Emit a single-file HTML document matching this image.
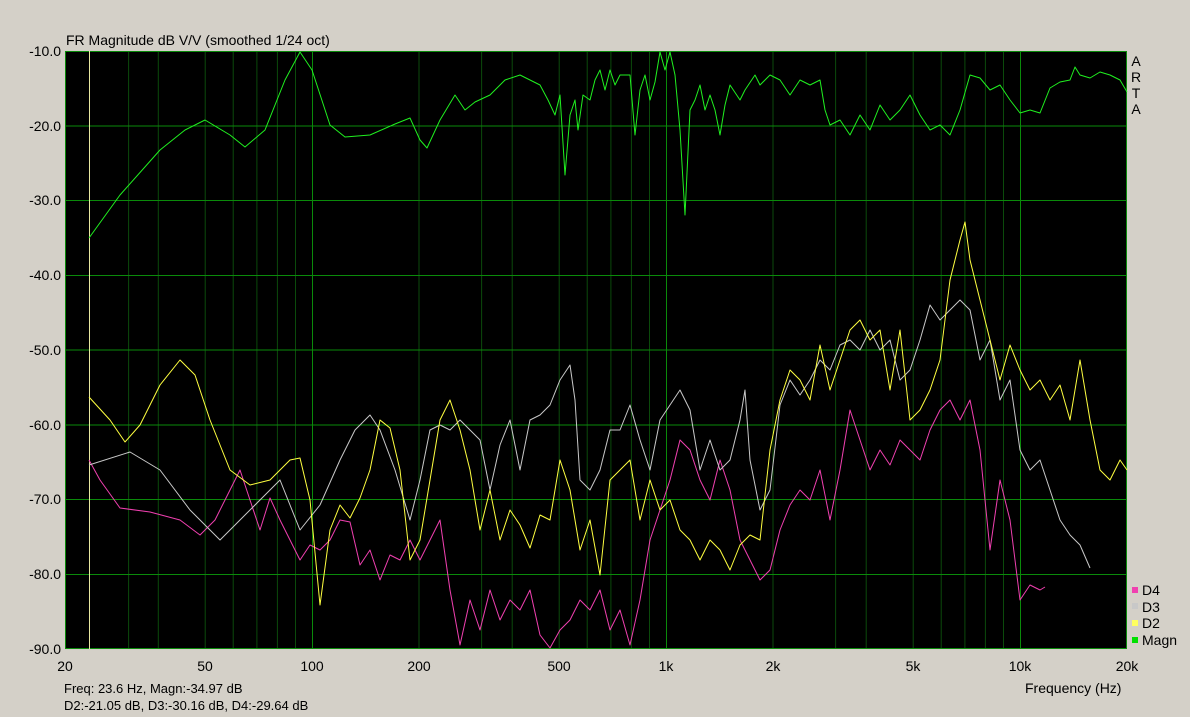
<!DOCTYPE html>
<html><head><meta charset="utf-8"><style>
html,body{margin:0;padding:0;background:#d4d0c8;}
svg{display:block;font-family:"Liberation Sans",sans-serif;font-size:13px;}
</style></head><body>
<svg width="1190" height="717" viewBox="0 0 1190 717">
<rect width="1190" height="717" fill="#d4d0c8"/>
<text x="66" y="45" font-size="14" fill="#000">FR Magnitude dB V/V (smoothed 1/24 oct)</text>
<rect x="65" y="51" width="1062" height="598" fill="#000"/>
<g stroke="#0b4a0b" stroke-width="1">
<line x1="128.6" y1="51" x2="128.6" y2="649"/><line x1="158.3" y1="51" x2="158.3" y2="649"/>
<line x1="205.2" y1="51" x2="205.2" y2="649"/><line x1="233.2" y1="51" x2="233.2" y2="649"/>
<line x1="256.9" y1="51" x2="256.9" y2="649"/><line x1="277.4" y1="51" x2="277.4" y2="649"/>
<line x1="295.5" y1="51" x2="295.5" y2="649"/>
<line x1="419" y1="51" x2="419" y2="649"/><line x1="481.6" y1="51" x2="481.6" y2="649"/>
<line x1="512.2" y1="51" x2="512.2" y2="649"/><line x1="559.2" y1="51" x2="559.2" y2="649"/>
<line x1="587.2" y1="51" x2="587.2" y2="649"/><line x1="610.9" y1="51" x2="610.9" y2="649"/>
<line x1="631.4" y1="51" x2="631.4" y2="649"/><line x1="649.5" y1="51" x2="649.5" y2="649"/>
<line x1="773" y1="51" x2="773" y2="649"/><line x1="835.6" y1="51" x2="835.6" y2="649"/>
<line x1="866.2" y1="51" x2="866.2" y2="649"/><line x1="913.2" y1="51" x2="913.2" y2="649"/>
<line x1="941.2" y1="51" x2="941.2" y2="649"/><line x1="964.9" y1="51" x2="964.9" y2="649"/>
<line x1="985.4" y1="51" x2="985.4" y2="649"/><line x1="1003.5" y1="51" x2="1003.5" y2="649"/>
</g>
<g stroke="#0a8a0a" stroke-width="1">
<line x1="65" y1="126" x2="1127" y2="126"/><line x1="65" y1="200.5" x2="1127" y2="200.5"/>
<line x1="65" y1="275.5" x2="1127" y2="275.5"/><line x1="65" y1="350" x2="1127" y2="350"/>
<line x1="65" y1="425" x2="1127" y2="425"/><line x1="65" y1="499.5" x2="1127" y2="499.5"/>
<line x1="65" y1="574.5" x2="1127" y2="574.5"/>
<line x1="312.5" y1="51" x2="312.5" y2="649"/><line x1="666.5" y1="51" x2="666.5" y2="649"/>
<line x1="1020.5" y1="51" x2="1020.5" y2="649"/>
</g>
<rect x="65.5" y="51.5" width="1061" height="597" fill="none" stroke="#0a8a0a"/>
<line x1="89.5" y1="51" x2="89.5" y2="649" stroke="#e8e8a0"/>
<g fill="none" stroke-width="1" stroke-linejoin="round">
<polyline stroke="#f040b0" points="89,460 100,480 120,508 150,512 180,520 200,535 215,520 230,490 240,470 250,500 260,530 270,498 280,520 290,540 300,560 310,545 320,550 330,540 340,520 350,522 360,565 370,550 380,580 390,555 400,560 410,540 420,560 430,540 440,520 450,590 460,645 470,600 480,630 490,590 500,620 510,600 520,610 530,590 540,635 550,648 560,630 570,620 580,600 590,610 600,590 610,630 620,610 630,645 640,600 650,540 660,510 670,480 680,440 690,450 700,480 710,500 720,460 730,490 740,540 750,560 760,580 770,570 780,530 790,505 800,490 810,500 820,470 830,520 840,470 850,410 860,440 870,470 880,450 890,465 900,440 910,450 920,460 930,430 940,410 950,400 960,420 970,400 980,450 990,550 1000,480 1010,520 1020,600 1030,585 1040,590 1045,587"/>
<polyline stroke="#c8c8c8" points="89,465 130,452 160,470 190,510 220,540 240,520 260,500 280,480 300,530 320,505 340,460 355,430 370,415 380,430 395,470 410,520 420,480 430,430 440,425 450,430 460,420 470,430 480,440 490,490 500,445 510,420 520,470 530,420 540,415 550,405 560,380 570,365 575,400 580,480 590,490 600,470 610,430 620,430 630,405 640,440 650,470 660,420 670,405 680,390 690,410 700,470 710,440 720,470 730,460 740,420 745,390 750,460 760,510 770,490 780,405 790,380 800,395 810,380 820,360 830,370 840,345 850,340 860,350 870,330 880,350 890,340 900,380 910,370 920,340 930,305 940,320 950,310 960,300 970,310 980,360 990,340 1000,400 1010,380 1020,450 1030,470 1040,460 1050,490 1060,520 1070,535 1080,545 1090,568"/>
<polyline stroke="#ffff40" points="89,397 110,420 125,442 140,425 160,385 180,360 195,375 210,420 230,470 250,485 270,480 290,460 300,458 310,500 320,605 330,530 340,505 350,518 360,498 370,470 380,420 390,428 400,470 410,560 420,540 430,480 440,420 450,400 460,430 470,470 480,530 490,490 500,540 510,510 520,525 530,548 540,515 550,520 560,460 570,490 580,550 590,520 600,575 610,480 620,470 630,460 640,520 650,480 660,510 670,500 680,530 690,540 700,560 710,540 720,550 730,570 740,545 750,535 760,540 770,450 780,400 790,370 800,380 810,400 820,345 830,390 840,360 850,330 860,320 870,340 880,330 890,390 900,330 910,420 920,410 930,390 940,360 950,280 960,240 965,222 970,260 980,300 990,340 1000,380 1010,345 1020,370 1030,390 1040,380 1050,400 1060,385 1070,420 1080,360 1090,420 1100,470 1110,480 1120,460 1127,470"/>
<polyline stroke="#20f020" points="89,238 120,195 160,150 185,130 205,120 230,135 245,147 265,130 285,80 300,52 312,70 330,125 345,137 370,135 395,124 410,118 420,140 427,148 440,120 455,95 465,110 475,102 490,95 505,80 520,75 540,85 548,100 555,115 560,95 565,175 570,115 575,100 578,130 583,95 590,100 595,80 600,70 605,90 610,70 615,85 620,75 630,75 635,135 640,90 645,75 650,100 655,82 660,52 665,70 670,52 675,75 680,130 685,215 690,110 695,100 700,85 705,110 710,95 715,110 720,135 725,105 730,85 740,100 745,90 755,75 760,85 770,75 780,80 790,95 800,80 810,85 820,80 825,110 830,125 840,120 850,135 860,115 870,130 880,105 890,120 900,110 910,95 920,115 930,130 940,125 950,135 960,110 970,75 980,78 990,90 1000,85 1010,100 1020,113 1030,110 1040,113 1050,88 1060,82 1070,80 1075,67 1080,75 1090,78 1100,72 1110,75 1120,80 1127,92"/>
</g>
<g text-anchor="end" font-size="14" fill="#000">
<text x="61" y="56">-10.0</text><text x="61" y="131">-20.0</text><text x="61" y="205">-30.0</text>
<text x="61" y="280">-40.0</text><text x="61" y="355">-50.0</text><text x="61" y="430">-60.0</text>
<text x="61" y="504">-70.0</text><text x="61" y="579">-80.0</text><text x="61" y="654">-90.0</text>
</g>
<g text-anchor="middle" font-size="14" fill="#000">
<text x="65" y="671">20</text><text x="205" y="671">50</text><text x="312" y="671">100</text>
<text x="419" y="671">200</text><text x="559" y="671">500</text><text x="666" y="671">1k</text>
<text x="773" y="671">2k</text><text x="913" y="671">5k</text><text x="1020" y="671">10k</text>
<text x="1127" y="671">20k</text>
</g>
<text x="1025" y="693" font-size="14">Frequency (Hz)</text>
<text x="64" y="693" font-size="13">Freq: 23.6 Hz, Magn:-34.97 dB</text>
<text x="64" y="710" font-size="13">D2:-21.05 dB, D3:-30.16 dB, D4:-29.64 dB</text>
<g font-size="14" text-anchor="middle"><text x="1136" y="66">A</text><text x="1136" y="82">R</text><text x="1136" y="98">T</text><text x="1136" y="114">A</text></g>
<rect x="1132" y="587" width="6" height="6" fill="#f040b0"/><text x="1142" y="595" font-size="14">D4</text>
<rect x="1132" y="603" width="6" height="6" fill="#c8c8c8"/><text x="1142" y="612" font-size="14">D3</text>
<rect x="1132" y="620" width="6" height="6" fill="#ffff60"/><text x="1142" y="628" font-size="14">D2</text>
<rect x="1132" y="637" width="6" height="6" fill="#00e000"/><text x="1142" y="645" font-size="14">Magn</text>
</svg>
</body></html>
